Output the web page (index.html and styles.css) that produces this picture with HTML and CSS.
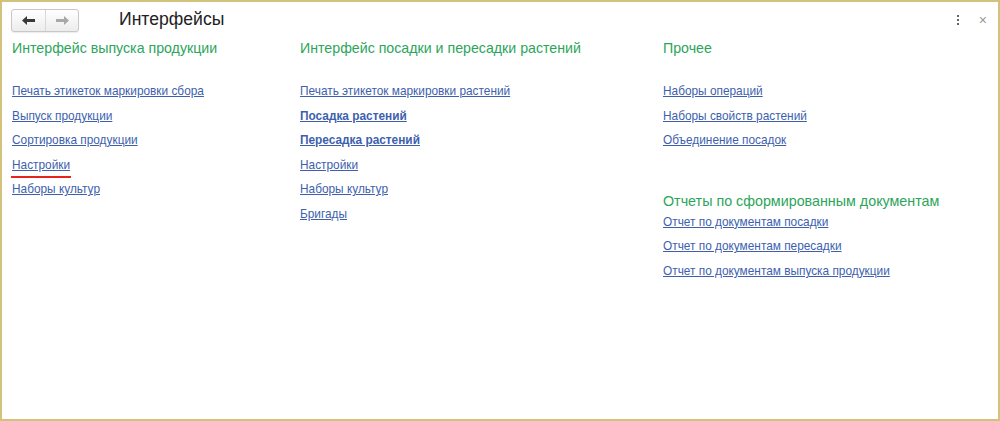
FILE: index.html
```html
<!DOCTYPE html>
<html lang="ru">
<head>
  <meta charset="UTF-8" />
  <title>Интерфейсы</title>
  <link rel="stylesheet" href="styles.css">
</head>
<body>
  <div class="window">
    <div class="header">
      <div class="nav">
        <button class="nav-btn">
          <svg width="13" height="9" viewBox="0 0 13 9"><path d="M0 4.5L5 0v3h8v3H5v3z" fill="#3a3a3a"/></svg>
        </button>
        <button class="nav-btn">
          <svg width="13" height="9" viewBox="0 0 13 9"><path d="M13 4.5L8 0v3H0v3h8v3z" fill="#a8a8a8"/></svg>
        </button>
      </div>
      <div class="title">Интерфейсы</div>
      <div class="tools">
        <span class="kebab"><i></i><i></i><i></i></span>
        <span class="close">×</span>
      </div>
    </div>

    <div class="columns">
      <div class="col col-1">
        <div class="group">
          <div class="group-title">Интерфейс выпуска продукции</div>
          <a href="#" class="link">Печать этикеток маркировки сбора</a>
          <a href="#" class="link">Выпуск продукции</a>
          <a href="#" class="link">Сортировка продукции</a>
          <a href="#" class="link marked">Настройки</a>
          <a href="#" class="link">Наборы культур</a>
        </div>
      </div>
      <div class="col col-2">
        <div class="group">
          <div class="group-title">Интерфейс посадки и пересадки растений</div>
          <a href="#" class="link">Печать этикеток маркировки растений</a>
          <a href="#" class="link bold">Посадка растений</a>
          <a href="#" class="link bold">Пересадка растений</a>
          <a href="#" class="link">Настройки</a>
          <a href="#" class="link">Наборы культур</a>
          <a href="#" class="link">Бригады</a>
        </div>
      </div>
      <div class="col col-3">
        <div class="group">
          <div class="group-title">Прочее</div>
          <a href="#" class="link">Наборы операций</a>
          <a href="#" class="link">Наборы свойств растений</a>
          <a href="#" class="link">Объединение посадок</a>
        </div>
        <div class="group reports">
          <div class="group-title">Отчеты по сформированным документам</div>
          <a href="#" class="link">Отчет по документам посадки</a>
          <a href="#" class="link">Отчет по документам пересадки</a>
          <a href="#" class="link">Отчет по документам выпуска продукции</a>
        </div>
      </div>
    </div>
  </div>
</body>
</html>
```

FILE: styles.css
```css
html, body {
  margin: 0;
  height: 100%;
}

body {
  font-family: "Liberation Sans", Arial, sans-serif;
  background: #fff;
}

.window {
  box-sizing: border-box;
  height: 421px;
  border: 2px solid #d2c27c;
  background: #fff;
}

.header {
  display: flex;
  align-items: center;
  height: 36px;
  padding: 0 0 0 9px;
}

.nav {
  display: flex;
  height: 21px;
  border: 1px solid #c8c8c8;
  border-radius: 3px;
  background: linear-gradient(#ffffff, #ececec);
  box-shadow: 0 1px 1px rgba(0, 0, 0, 0.08);
}

.nav-btn {
  width: 33px;
  height: 21px;
  padding: 0;
  border: none;
  background: transparent;
  display: flex;
  align-items: center;
  justify-content: center;
}

.nav-btn + .nav-btn {
  border-left: 1px solid #d8d8d8;
}

.title {
  margin-left: 40px;
  font-size: 17.6px;
  color: #222;
  padding-bottom: 2px;
}

.tools {
  margin-left: auto;
  display: flex;
  align-items: center;
  gap: 20px;
  padding-right: 11px;
}

.kebab {
  display: flex;
  flex-direction: column;
  gap: 2px;
}

.kebab i {
  width: 2px;
  height: 2px;
  background: #666;
}

.close {
  font-size: 14px;
  color: #999;
}

.columns {
  display: flex;
  padding: 0 0 0 10px;
}

.col-1 { width: 288px; }
.col-2 { width: 363px; }
.col-3 { flex: 1; }

.group {
  display: flex;
  flex-direction: column;
  align-items: flex-start;
}

.group-title {
  font-size: 14.2px;
  color: #2ca55b;
  height: 20px;
  margin-top: 2px;
  margin-bottom: 24px;
}

.link {
  font-size: 11.85px;
  color: #3e5fae;
  text-decoration: underline;
  line-height: 15px;
  margin-bottom: 9.6px;
}

.bold {
  font-weight: bold;
}

.marked {
  position: relative;
}

.marked::after {
  content: "";
  position: absolute;
  left: -1px;
  right: -1px;
  bottom: -5px;
  height: 2px;
  background: #e8221e;
}

.reports {
  margin-top: 33px;
}

.reports .group-title {
  font-size: 14.3px;
  margin-bottom: 2px;
}
```
